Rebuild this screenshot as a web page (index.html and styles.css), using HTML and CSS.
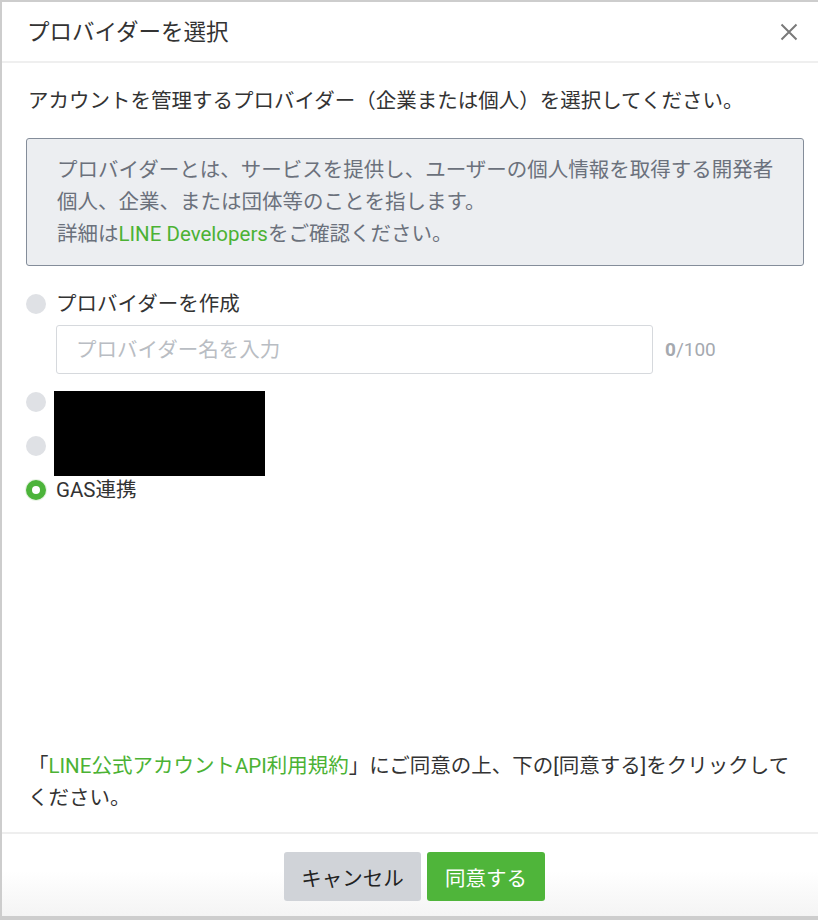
FILE: index.html
```html
<!DOCTYPE html>
<html lang="ja">
<head>
<meta charset="utf-8">
<title>プロバイダーを選択</title>
<link rel="stylesheet" href="styles.css">
</head>
<body>
<div class="dialog">
  <header class="dlg-head">
    <h1 class="dlg-title">プロバイダーを選択</h1>
    <button class="close" aria-label="閉じる">
      <svg width="18" height="18" viewBox="0 0 18 18"><path d="M1.5 1.5 L16.5 16.5 M16.5 1.5 L1.5 16.5" stroke="#7a7a7a" stroke-width="2" fill="none"/></svg>
    </button>
  </header>
  <main class="dlg-body">
    <p class="lead">アカウントを管理するプロバイダー（企業または個人）を選択してください。</p>
    <div class="info">
      プロバイダーとは、サービスを提供し、ユーザーの個人情報を取得する開発者<br>
      個人、企業、または団体等のことを指します。<br>
      詳細は<a class="link" href="#">LINE Developers</a>をご確認ください。
    </div>
    <div class="options">
      <label class="opt">
        <span class="radio"></span>
        <span class="opt-label">プロバイダーを作成</span>
      </label>
      <div class="name-row">
        <input class="name-input" type="text" placeholder="プロバイダー名を入力">
        <span class="counter"><b>0</b>/100</span>
      </div>
      <div class="hidden-opts">
        <label class="opt"><span class="radio"></span><span class="opt-label"></span></label>
        <label class="opt"><span class="radio"></span><span class="opt-label"></span></label>
        <div class="redact"></div>
      </div>
      <label class="opt">
        <span class="radio checked"></span>
        <span class="opt-label">GAS連携</span>
      </label>
    </div>
    <p class="terms">「<a class="link" href="#">LINE公式アカウントAPI利用規約</a>」にご同意の上、下の[同意する]をクリックしてください。</p>
  </main>
  <footer class="dlg-foot">
    <button class="btn btn-cancel">キャンセル</button>
    <button class="btn btn-agree">同意する</button>
  </footer>
</div>
</body>
</html>
```
FILE: styles.css
```css
* { box-sizing: border-box; }
html, body { margin: 0; padding: 0; }
body {
  background: #cdcdcd;
  font-family: "Roboto", "Noto Sans CJK JP", sans-serif;
  color: #333;
}
.dialog {
  margin: 2px 0 0 2px;
  width: 816px;
  height: 914px;
  background: #fff;
  display: flex;
  flex-direction: column;
}
.dlg-head {
  height: 61px;
  border-bottom: 2px solid #efefef;
  display: flex;
  align-items: center;
  justify-content: space-between;
  padding: 0 18px 0 25px;
}
.dlg-title {
  margin: 0;
  font-size: 22.5px;
  font-weight: 400;
  color: #333;
  line-height: 30px;
}
.close {
  border: 0;
  background: none;
  padding: 0;
  width: 22px;
  height: 22px;
  display: flex;
  align-items: center;
  justify-content: center;
  cursor: pointer;
}
.dlg-body {
  flex: 1;
  display: flex;
  flex-direction: column;
  padding: 22px 14px 0 24px;
}
.lead {
  margin: 0;
  font-size: 20.5px;
  line-height: 32px;
  color: #333;
  padding-left: 2px;
}
.info {
  margin-top: 21px;
  background: #eceef1;
  border: 1px solid #848d9a;
  border-radius: 3px;
  padding: 15px 20px 15px 30px;
  font-size: 20.5px;
  line-height: 32px;
  color: #6b717c;
}
.link {
  color: #4bb234;
  text-decoration: none;
}
.options {
  margin-top: 22px;
  display: flex;
  flex-direction: column;
  gap: 12px;
}
.opt {
  display: flex;
  align-items: center;
  gap: 10px;
  height: 32px;
}
.radio {
  width: 20px;
  height: 20px;
  border-radius: 50%;
  background: #dfe1e5;
  flex: none;
  position: relative;
}
.radio.checked {
  background: #4cb43a;
  box-shadow: 0 0 0 1px #e8f3e4;
}
.radio.checked::after {
  content: "";
  position: absolute;
  left: 6px;
  top: 6px;
  width: 8px;
  height: 8px;
  border-radius: 50%;
  background: #fff;
}
.opt-label {
  font-size: 20.5px;
  color: #333;
  line-height: 32px;
}
.name-row {
  display: flex;
  align-items: center;
  gap: 12px;
  margin: -7px 0 0 30px;
}
.name-input {
  width: 597px;
  height: 49px;
  border: 1px solid #d6d9dd;
  border-radius: 3px;
  padding: 0 19px;
  font-family: inherit;
  font-size: 20.5px;
  color: #333;
  outline: none;
}
.name-input::placeholder { color: #b9bdc3; }
.counter {
  font-size: 19px;
  color: #a5a9af;
}
.counter b { font-weight: 700; }
.hidden-opts {
  position: relative;
  display: flex;
  flex-direction: column;
  gap: 12px;
}
.redact {
  position: absolute;
  left: 28px;
  top: 5px;
  width: 211px;
  height: 85px;
  background: #000;
}
.terms {
  margin: auto 0 0 0;
  padding: 0 0 18px 2px;
  font-size: 20.5px;
  line-height: 32px;
  color: #333;
}
.dlg-foot {
  border-top: 2px solid #eeeeee;
  height: 84px;
  display: flex;
  justify-content: center;
  align-items: flex-start;
  gap: 6px;
  padding: 18px 0 0 9px;
  background: linear-gradient(to bottom, #ffffff 45%, #f4f4f4 100%);
}
.btn {
  height: 49px;
  border: 0;
  border-radius: 3px;
  font-family: inherit;
  font-size: 20.5px;
  cursor: pointer;
  padding: 0 10px;
}
.btn-cancel {
  width: 137px;
  background: #d0d3d8;
  color: #222;
}
.btn-agree {
  width: 118px;
  background: #4fb53a;
  color: #fff;
}
```
